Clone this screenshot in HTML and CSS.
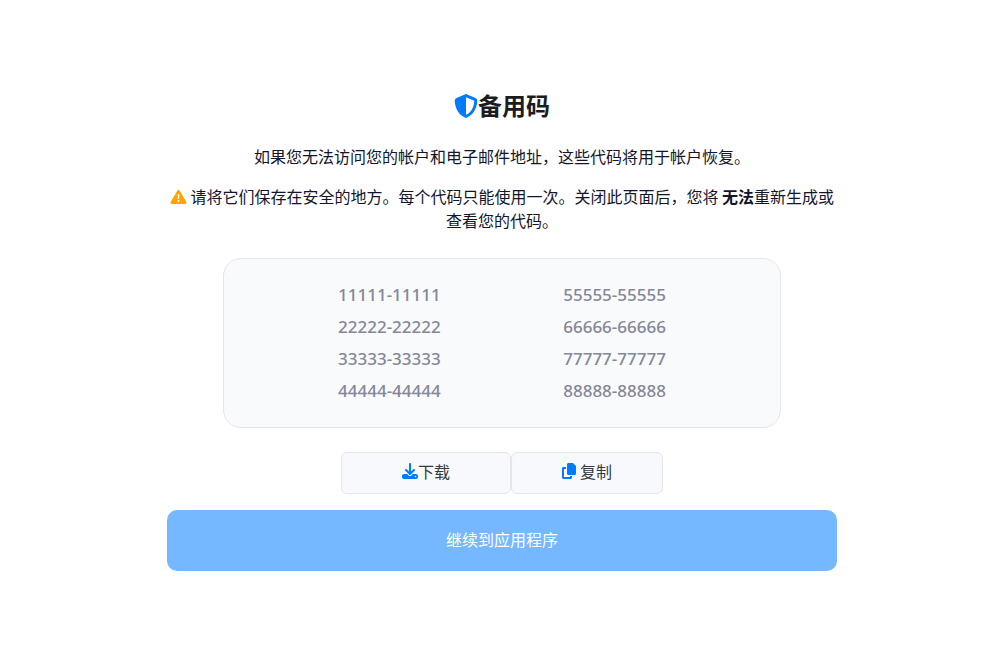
FILE: index.html
```html
<!DOCTYPE html>
<html lang="zh-CN">
<head>
    <meta charset="UTF-8">
    <meta name="viewport" content="width=device-width, initial-scale=1.0">
    <title>备用码</title>
    <link rel="stylesheet" href="styles.css">
</head>
<body>

    <main class="container">
        <h1 class="title">
            <svg class="icon icon-title" viewBox="0 0 512 512" aria-hidden="true"><path d="M256 0c4.6 0 9.2 1 13.4 2.9L457.7 82.8c22 9.3 38.4 31 38.3 57.2c-.5 99.2-41.3 280.7-213.6 363.2c-16.7 8-36.1 8-52.8 0C57.3 420.7 16.5 239.2 16 140c-.1-26.2 16.3-47.9 38.3-57.2L242.7 2.9C246.8 1 251.4 0 256 0zm0 66.8V444.8C394 378 431.1 230.1 432 141.4L256 66.8z"/></svg>
            <span>备用码</span>
        </h1>

        <p class="text">如果您无法访问您的帐户和电子邮件地址，这些代码将用于帐户恢复。</p>

        <p class="text">
            <svg class="icon icon-warning" viewBox="0 0 512 512" aria-hidden="true"><path d="M256 32c14.2 0 27.3 7.5 34.5 19.8l216 368c7.3 12.4 7.3 27.7 .2 40.1S486.3 480 472 480H40c-14.3 0-27.6-7.7-34.7-20.1s-7-27.8 .2-40.1l216-368C228.7 39.5 241.8 32 256 32zm0 128c-13.3 0-24 10.7-24 24V296c0 13.3 10.7 24 24 24s24-10.7 24-24V184c0-13.3-10.7-24-24-24zm32 224a32 32 0 1 0 -64 0 32 32 0 1 0 64 0z"/></svg>
            请将它们保存在安全的地方。每个代码只能使用一次。关闭此页面后，您将 <strong>无法</strong>重新生成或查看您的代码。
        </p>

        <!-- Codes -->
        <ul class="codes">
            <li>11111-11111</li>
            <li>22222-22222</li>
            <li>33333-33333</li>
            <li>44444-44444</li>
            <li>55555-55555</li>
            <li>66666-66666</li>
            <li>77777-77777</li>
            <li>88888-88888</li>
        </ul>

        <!-- Actions -->
        <div class="actions">
            <button type="button" class="btn btn-download">
                <svg class="icon" viewBox="0 0 512 512" aria-hidden="true"><path d="M288 32c0-17.7-14.3-32-32-32s-32 14.3-32 32V274.7l-73.4-73.4c-12.5-12.5-32.8-12.5-45.3 0s-12.5 32.8 0 45.3l128 128c12.5 12.5 32.8 12.5 45.3 0l128-128c12.5-12.5 12.5-32.8 0-45.3s-32.8-12.5-45.3 0L288 274.7V32zM64 352c-35.3 0-64 28.7-64 64v32c0 35.3 28.7 64 64 64H448c35.3 0 64-28.7 64-64V416c0-35.3-28.7-64-64-64H346.5l-45.3 45.3c-25 25-65.5 25-90.5 0L165.5 352H64zm368 56a24 24 0 1 1 0 48 24 24 0 1 1 0-48z"/></svg>
                <span>下载</span>
            </button>
            <button type="button" class="btn btn-copy">
                <svg class="icon icon-copy" viewBox="0 0 448 512" aria-hidden="true"><path d="M208 0H332.1c12.7 0 24.9 5.1 33.9 14.1l67.9 67.9c9 9 14.1 21.2 14.1 33.9V336c0 26.5-21.5 48-48 48H208c-26.5 0-48-21.5-48-48V48c0-26.5 21.5-48 48-48zM48 128h80v64H64V448H256V416h64v48c0 26.5-21.5 48-48 48H48c-26.5 0-48-21.5-48-48V176c0-26.5 21.5-48 48-48z"/></svg>
                <span>复制</span>
            </button>
        </div>

        <button type="button" class="continue" disabled>继续到应用程序</button>
    </main>

</body>
</html>
```
FILE: styles.css
```css
* {
    box-sizing: border-box;
    margin: 0;
    padding: 0;
}

body {
    display: flex;
    align-items: center;
    min-height: 100vh;
    padding: 0 170px 0 167px;
    background: #ffffff;
    color: #12152c;
    font-family: "Noto Sans", "Noto Sans CJK SC", sans-serif;
    font-size: 16px;
    line-height: 24px;
}

.container {
    display: flex;
    flex-direction: column;
    width: 100%;
    padding-bottom: 2px;
    text-align: center;
}

.icon {
    width: 16px;
    height: 16px;
    fill: #007bff;
}

/* Title and text */
.title {
    display: flex;
    justify-content: center;
    align-items: center;
    margin-bottom: 18px;
    color: #1b1c22;
    font-size: 24px;
    line-height: 40px;
}

.icon-title {
    width: 24px;
    height: 24px;
}

.text {
    margin-bottom: 16px;
    font-family: "Noto Sans CJK SC", sans-serif;
}

.icon-warning {
    width: 17px;
    fill: #ffa500;
    vertical-align: -2px;
}

/* Codes */
.codes {
    display: grid;
    grid-template-rows: repeat(4, 32px);
    grid-auto-columns: 1fr;
    grid-auto-flow: column;
    width: calc(100% * 5 / 6);
    margin: 10px auto 24px;
    padding: 20px 53px;
    background: #f9fafc;
    border: 1px solid #e3e5f1;
    border-radius: 18px;
    color: #848798;
    font-size: 17px;
    font-weight: 500;
    line-height: 32px;
    list-style: none;
}

/* Buttons */
.actions {
    display: flex;
    justify-content: center;
    margin-bottom: 16px;
}

.btn {
    display: flex;
    align-items: center;
    height: 42px;
    background: #f8f9fd;
    border: 1px solid #e3e5f1;
    border-radius: 6px;
    color: #343a40;
    font-family: inherit;
    font-size: 16px;
    cursor: pointer;
}

.btn-download {
    padding: 0 60px 3px;
}

.btn-copy {
    gap: 4px;
    padding: 0 50px 3px;
}

.icon-copy {
    width: 14px;
}

.continue {
    width: 100%;
    height: 61px;
    padding-bottom: 3px;
    background: #75b8ff;
    border: none;
    border-radius: 10px;
    color: #ffffff;
    font-family: inherit;
    font-size: 16px;
}

@media (max-width: 768px) {
    body {
        padding: 20px;
    }

    .codes {
        width: 100%;
        padding: 20px;
    }
}
```
